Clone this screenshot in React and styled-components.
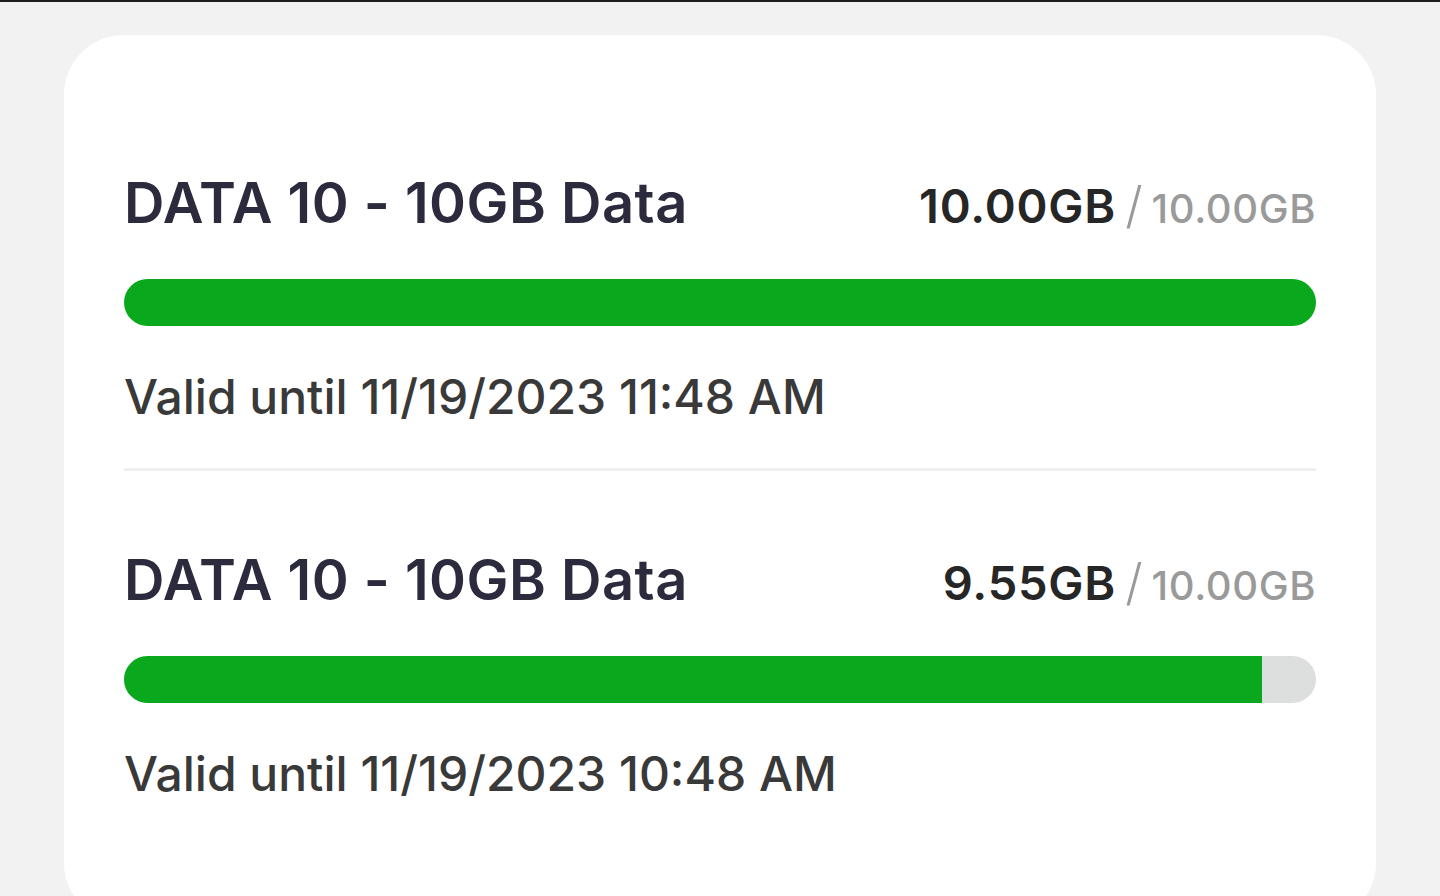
import React from "react";
import styled, { createGlobalStyle } from "styled-components";

const GlobalStyle = createGlobalStyle`
  html, body {
    margin: 0;
    padding: 0;
    background: #f2f2f2;
  }
  body {
    font-family: Inter, "Open Sans", sans-serif;
    border-top: 2px solid #1e1e1e;
    overflow: hidden;
  }
`;

const Page = styled.div`
  padding: 33px 64px 0;
  height: 894px;
  box-sizing: border-box;
`;

const Card = styled.section`
  background: #ffffff;
  border-radius: 60px;
  padding: 134px 60px 120px;
`;

const Item = styled.article`
  display: flex;
  flex-direction: column;
`;

const Header = styled.div`
  display: flex;
  justify-content: space-between;
  align-items: baseline;
`;

const Title = styled.h2`
  margin: 0;
  font-size: 56px;
  line-height: 68px;
  font-weight: 600;
  color: #2b2b3d;
  letter-spacing: 0.5px;
`;

const Usage = styled.div`
  display: flex;
  align-items: baseline;
`;

const Used = styled.span`
  font-size: 47px;
  font-weight: 600;
  color: #262626;
  letter-spacing: 0.8px;
`;

const Slash = styled.span`
  font-size: 50px;
  font-weight: 300;
  color: #9a9a9a;
  margin: 0 9px 0 9px;
`;

const Total = styled.span`
  font-size: 40px;
  font-weight: 500;
  color: #9a9a9a;
  letter-spacing: 0.6px;
`;

const Track = styled.div`
  margin-top: 42px;
  height: 47px;
  border-radius: 24px;
  background: #dddfde;
  overflow: hidden;
`;

const Fill = styled.div`
  height: 100%;
  background: #0aa81d;
`;

const Valid = styled.p`
  margin: 42px 0 0;
  font-size: 48px;
  line-height: 58px;
  font-weight: 500;
  color: #393939;
`;

const Divider = styled.hr`
  border: 0;
  height: 3px;
  background: #f0f0f0;
  margin: 42px 0 75px;
`;

const plans = [
  { name: "DATA 10 - 10GB Data", used: 10.0, total: 10.0, valid: "11/19/2023 11:48 AM" },
  { name: "DATA 10 - 10GB Data", used: 9.55, total: 10.0, valid: "11/19/2023 10:48 AM" },
];

const App = () => (
  <>
    <GlobalStyle />
    <Page>
      <Card>
        {plans.map((plan, i) => (
          <React.Fragment key={i}>
            {i > 0 && <Divider />}
            <Item>
              <Header>
                <Title>{plan.name}</Title>
                <Usage>
                  <Used>{plan.used.toFixed(2)}GB</Used>
                  <Slash>/</Slash>
                  <Total>{plan.total.toFixed(2)}GB</Total>
                </Usage>
              </Header>
              <Track>
                <Fill style={{ width: `${(plan.used / plan.total) * 100}%` }} />
              </Track>
              <Valid>Valid until {plan.valid}</Valid>
            </Item>
          </React.Fragment>
        ))}
      </Card>
    </Page>
  </>
);

export default App;
